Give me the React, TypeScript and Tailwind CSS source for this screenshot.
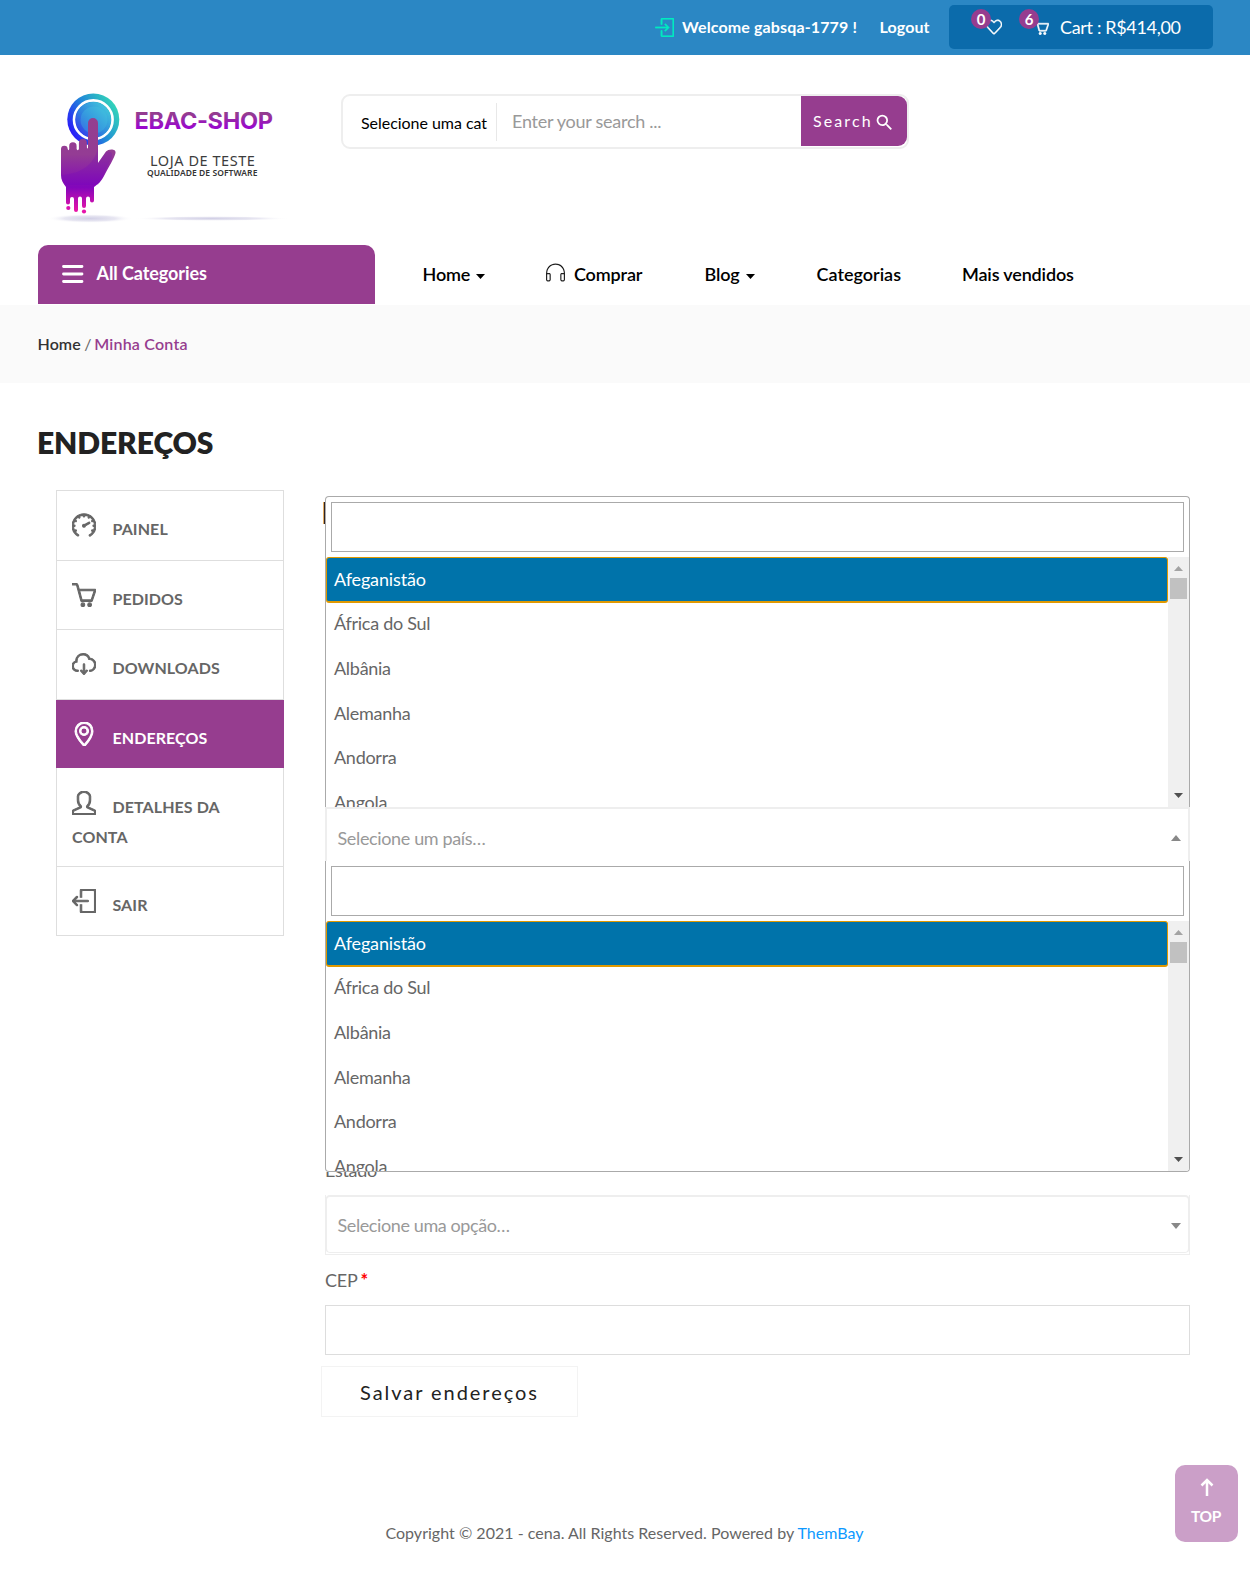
import React from 'react'
import type { IconType } from 'react-icons'
import {
  SlBasket,
  SlCloudDownload,
  SlEarphones,
  SlHeart,
  SlLocationPin,
  SlLogin,
  SlLogout,
  SlSpeedometer,
  SlUser,
} from 'react-icons/sl'
import { MdSearch } from 'react-icons/md'

const countries = ['Afeganistão', 'África do Sul', 'Albânia', 'Alemanha', 'Andorra', 'Angola']

type Item = { label: string; icon: IconType; box: string; active?: boolean }

const account: Item[] = [
  { label: 'PAINEL', icon: SlSpeedometer, box: 'h-[70px] pt-[23px]' },
  { label: 'PEDIDOS', icon: SlBasket, box: 'h-[69px] pt-[23px]' },
  { label: 'DOWNLOADS', icon: SlCloudDownload, box: 'h-[70px] pt-[23px]' },
  { label: 'ENDEREÇOS', icon: SlLocationPin, box: 'h-[68px] pt-[23px]', active: true },
  { label: 'DETALHES DA CONTA', icon: SlUser, box: 'h-[99px] pt-[24px]' },
  { label: 'SAIR', icon: SlLogout, box: 'h-[69px] pt-[23px]' },
]

function Triangle({ up = false, className }: { up?: boolean; className: string }) {
  return (
    <svg viewBox="0 0 10 6" preserveAspectRatio="none" className={className} fill="currentColor">
      <path d={up ? 'M0 6 5 0l5 6z' : 'M0 0h10L5 6z'} />
    </svg>
  )
}

function Logo() {
  return (
    <svg width="280" height="150" viewBox="0 0 280 150" className="block">
      <defs>
        <linearGradient id="ring" x1="0" y1="0.8" x2="1" y2="0.2">
          <stop offset="0" stopColor="#2b08ff" />
          <stop offset="0.5" stopColor="#2189d8" />
          <stop offset="1" stopColor="#35e0b4" />
        </linearGradient>
        <linearGradient id="disc" x1="0" y1="1" x2="0.9" y2="0.1">
          <stop offset="0" stopColor="#3527ee" />
          <stop offset="0.5" stopColor="#2f86de" />
          <stop offset="1" stopColor="#42c8dc" />
        </linearGradient>
        <linearGradient id="hand" x1="0" y1="38" x2="0" y2="134" gradientUnits="userSpaceOnUse">
          <stop offset="0" stopColor="#94408f" />
          <stop offset="0.38" stopColor="#943c94" />
          <stop offset="0.72" stopColor="#8206bb" />
          <stop offset="1" stopColor="#f516a6" />
        </linearGradient>
        <linearGradient id="word" x1="0" y1="32" x2="0" y2="49" gradientUnits="userSpaceOnUse">
          <stop offset="0.1" stopColor="#943d90" />
          <stop offset="0.9" stopColor="#9a08cc" />
        </linearGradient>
        <radialGradient id="shadow">
          <stop offset="0" stopColor="#d2d0e6" />
          <stop offset="0.6" stopColor="#e8e7f2" />
          <stop offset="1" stopColor="#ffffff" stopOpacity="0" />
        </radialGradient>
      </defs>
      <ellipse cx="60" cy="138.5" rx="43" ry="4.5" fill="url(#shadow)" />
      <ellipse cx="182" cy="138.5" rx="78" ry="2.5" fill="url(#shadow)" />
      <circle cx="63.3" cy="39.5" r="26" fill="url(#ring)" />
      <circle cx="63.3" cy="39.7" r="19.3" fill="none" stroke="#fff" strokeWidth="2.6" />
      <circle cx="63.3" cy="39.7" r="17.6" fill="url(#disc)" />
      <circle cx="64" cy="40" r="13.5" fill="#45c7e0" opacity="0.3" />
      <path
        fill="url(#hand)"
        d="M31 69a3.300 3.300 0 0 1 6.700 0c.3 1.500 1.300 1.500 1.500 0V66a3.700 3.700 0 0 1 7.400 0v3c.3 1.500 2 1.500 2.300 0V63a4 4 0 0 1 8 0v4.500c.2 1.300 1 1.300 1.100 0V43a5 5 0 0 1 10 0v40l8-11.500c2.500-3 10.500-3 9.500 1.500-1 5-7.500 15-11.500 23-3 6-6 8-10 11v13.500a2 2 0 0 1-4 0v-2a2 2 0 0 0-4 0v7.500a2 2 0 0 1-4 0v-7.500a2 2 0 0 0-4 0v11.500a2 2 0 0 1-4 0V119a2 2 0 0 0-4 0v3.500a2 2 0 0 1-4 0V107c-3-4-5-7-5-12z"
      />
      <path fill="#6d00c4" opacity="0.2" d="M31 95c19-1 34-10 37-28v16l8-11c6-1 8 1 4 9-4 8-8 17-12 24H36c-3-4-5-6-5-10z" />
      <circle cx="38.3" cy="128" r="2.1" fill="#dc12b2" />
      <circle cx="54" cy="131.5" r="2.1" fill="#e614aa" />
      <text x="104.500" y="49" textLength="138" className="font-['Inter'] text-[23.5px] font-bold" fill="url(#word)">
        EBAC-SHOP
      </text>
      <text x="120" y="86" textLength="104.500" className="font-['Noto_Sans'] text-[14.5px]" fill="#3c3c3c">
        LOJA DE TESTE
      </text>
      <text x="117" y="96" textLength="110" className="font-['Noto_Sans'] text-[8.5px] font-semibold" fill="#333">
        QUALIDADE DE SOFTWARE
      </text>
    </svg>
  )
}

function Dropdown({ className }: { className: string }) {
  return (
    <div className={`relative flex flex-col overflow-hidden border-x border-[#aaa] bg-white ${className}`}>
      <div className="shrink-0 p-[5px]">
        <div className="h-[50px] border border-[#aaa]" />
      </div>
      <div className="flex h-[250px] shrink-0">
        <ul className="h-full flex-1 overflow-hidden">
          {countries.map((name, i) => (
            <li
              key={name}
              className={
                i === 0
                  ? 'flex h-[45.500px] items-center rounded-[3px] border border-b-2 border-[#e09900] bg-[#0073aa] pl-[7px] text-white tracking-[-0.14px]'
                  : 'flex h-[44.700px] items-center pb-[2px] pl-2 tracking-[-0.28px] text-[#666]'
              }
            >
              {name}
            </li>
          ))}
        </ul>
        <div className="flex w-[21px] flex-col items-center bg-[#f0f0f0] pt-[9px] pb-[9px]">
          <Triangle up className="h-[5px] w-[9px] text-[#a3a3a3]" />
          <div className="mt-[7px] h-[21px] w-[17px] bg-[#c1c1c1]" />
          <Triangle className="mt-auto h-[5px] w-[9px] text-[#505050]" />
        </div>
      </div>
    </div>
  )
}

function Count({ children }: { children: React.ReactNode }) {
  return (
    <span className="flex size-5 -translate-y-2 items-center justify-center rounded-full bg-[#963d8f] text-[15px] font-bold leading-none">
      {children}
    </span>
  )
}

export default function App() {
  return (
    <div className="relative h-[1591px] w-[1250px] overflow-hidden bg-white font-['Lato',sans-serif] text-[18px] tracking-[-0.4px] text-[#666]">
      <header className="flex h-[55px] items-start bg-[#2b87c4] pl-[655px] text-white">
        <SlLogin className="mt-[18px] size-[19px] stroke-[#00ecc0] stroke-[36] text-[#00ecc0]" />
        <span className="ml-2 mt-[17px] w-[197.500px] whitespace-nowrap text-[16px] font-bold leading-5 tracking-[0.13px]">
          Welcome gabsqa-1779 !
        </span>
        <span className="mt-[17px] w-[69.500px] text-[16px] font-bold leading-5 tracking-[0.1px]">Logout</span>
        <div className="mt-[5px] flex h-11 w-[264px] items-center rounded-[5px] bg-[#0b6bab] pl-[22px]">
          <span className="flex w-12 items-center">
            <SlHeart className="order-2 -ml-[5px] size-4 stroke-white stroke-[40]" />
            <Count>0</Count>
          </span>
          <span className="flex items-center">
            <SlBasket className="order-2 -ml-[6px] mr-px size-4 stroke-white stroke-[40]" />
            <Count>6</Count>
          </span>
          <span className="ml-[10px] whitespace-nowrap tracking-[-0.34px]">Cart : R$414,00</span>
        </div>
      </header>

      <div className="flex h-[190px]">
        <div className="ml-[30px] mt-[25px]">
          <Logo />
        </div>
        <form className="ml-[31px] mt-[39px] flex h-[55px] w-[568px] items-center rounded-[9px] border-2 border-[#eee]">
          <div className="ml-[18px] w-[136px] whitespace-nowrap border-r border-[#e8e8e8] pt-[2px] text-[16px] leading-[36px] tracking-[-0.04px] text-black">
            Selecione uma cat
          </div>
          <div className="ml-[15px] flex-1 tracking-[-0.26px] text-[#999]">Enter your search ...</div>
          <div className="flex h-[50px] w-[106px] items-center self-start rounded-r-[9px] bg-[#963d8f] pl-[12px] text-white">
            <span className="text-[16px] tracking-[2.100px]">Search</span>
            <MdSearch className="ml-px mt-[2px] size-[21px]" />
          </div>
        </form>
      </div>

      <nav className="flex h-[60px] pl-[38px] font-semibold text-black">
        <div className="flex h-[59px] w-[337px] items-center rounded-t-[10px] bg-[#963d8f] pb-[2px] pl-6 text-white">
          <svg width="22" height="18" viewBox="0 0 22 18" stroke="white" strokeWidth="2.8" strokeLinecap="round">
            <path d="M1.500 1.500h18.500M1.500 9h18.500M1.500 16.500h18.500" />
          </svg>
          <span className="ml-[12.500px] font-bold tracking-[-0.080px]">All Categories</span>
        </div>
        <div className="ml-[47.500px] flex h-[58px] items-center whitespace-nowrap tracking-[-0.150px]">
          <div className="flex w-[123.500px] items-center">
            Home
            <Triangle className="ml-[6px] mt-[4px] h-[5px] w-[9px]" />
          </div>
          <div className="flex w-[158.500px] items-center">
            <SlEarphones className="-mt-[3px] mr-[9px] size-[19px] stroke-white stroke-[10]" />
            Comprar
          </div>
          <div className="flex w-28 items-center">
            Blog
            <Triangle className="ml-[6px] mt-[4px] h-[5px] w-[9px]" />
          </div>
          <div className="w-[145.500px] tracking-[0px]">Categorias</div>
          <div>Mais vendidos</div>
        </div>
      </nav>

      <div className="flex h-[78px] items-center whitespace-pre bg-[#fafafa] pl-[37.500px] text-[16px] font-semibold tracking-[0.1px]">
        <span className="text-[#333]">Home</span>
        <span className="font-normal tracking-[-0.7px]"> / </span>
        <span className="tracking-[0.22px] text-[#963d8f]">Minha Conta</span>
      </div>

      <h1 className="mt-[40px] h-[67px] pl-[37px] text-[30px] font-extrabold leading-[38px] tracking-[-0.1px] text-[#222]">
        ENDEREÇOS
      </h1>

      <main className="flex pl-14">
        <ul className="h-[447px] w-[228px] border-t border-[#dedede] text-[16px] font-bold leading-[30px] tracking-[0.080px]">
          {account.map(({ label, icon: Icon, box, active }) => (
            <li
              key={label}
              className={`border-x px-[15px] ${box} ${active ? 'border-[#963d8f] bg-[#963d8f] text-white' : 'border-b border-[#dedede]'}`}
            >
              <Icon className="-mt-3 mr-[16.500px] inline size-6 stroke-current stroke-[44]" />
              {label}
            </li>
          ))}
        </ul>

        <section className="relative ml-[37px] mt-[6px] w-[869px] pl-1">
          <h3 className="absolute left-0 top-[-1px] text-[30px] font-medium leading-[34px] text-[#222]">Endereço</h3>
          <div className="relative">
            <Dropdown className="h-[311px] rounded-t-[4px] border-t" />
            <div className="flex h-[54px] items-center justify-between border-x-2 border-t-2 border-[#eee] bg-white pl-[10.500px] pr-[7px] pt-[7px] tracking-[-0.36px] text-[#999]">
              Selecione um país…
              <Triangle up className="-mt-[2px] h-[6px] w-[10px] text-[#888]" />
            </div>
            <Dropdown className="h-[311px] rounded-b-[4px] border-b" />
          </div>
          <div className="h-[7px] overflow-hidden">
            <span className="-mt-[13px] block leading-[22px] tracking-[-0.3px]">Estado</span>
          </div>
          <div className="mt-[16px] border border-t-0 border-[#eee] pb-[1px]">
            <div className="-mx-px flex h-[58px] items-center justify-between rounded-[5px] border border-x-2 border-t-2 border-[#eee] pl-[10.500px] pr-[7px] pt-px text-[#999]">
              Selecione uma opção…
              <Triangle className="mt-px h-[6px] w-[10px] text-[#888]" />
            </div>
          </div>
          <label className="mt-[12px] block leading-[26px] tracking-[-0.2px]">
            CEP <span className="-ml-px font-bold text-[#ff0000]">*</span>
          </label>
          <div className="mt-[12px] h-[50px] border border-[#ddd]" />
          <button className="-ml-1 mt-[11px] block h-[51px] w-[257px] border border-[#f3f3f3] pt-px text-[20px] tracking-[1.95px] text-[#222]">
            Salvar endereços
          </button>
        </section>
      </main>

      <footer className="mt-[106px] pr-px text-center text-[16px] leading-5 tracking-[0.020px]">
        Copyright © 2021 - cena. All Rights Reserved. Powered by <span className="text-[#0d99ff]">ThemBay</span>
      </footer>

      <button className="absolute bottom-[49px] right-3 flex h-[77px] w-[63px] flex-col items-center rounded-[10px] bg-[#cb9fc8] pt-[13px] text-[15.500px] font-bold leading-5 text-white">
        <svg width="14" height="18" viewBox="0 0 14 18" fill="none" stroke="white" strokeWidth="2.5">
          <path d="M7 18V2M1.500 7.500 7 2l5.500 5.500" />
        </svg>
        <span className="mr-px mt-[10px]">TOP</span>
      </button>
    </div>
  )
}
